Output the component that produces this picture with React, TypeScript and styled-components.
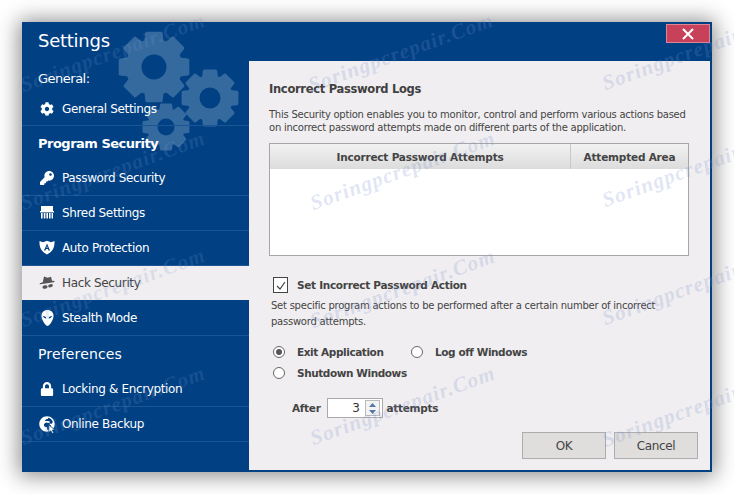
import React from "react";
import styled, { createGlobalStyle } from "styled-components";
import { FaCog, FaKey, FaLock, FaGlobeAfrica } from "react-icons/fa";

const Global = createGlobalStyle`
  html, body { margin: 0; padding: 0; background: #fff; width: 734px; height: 494px; overflow: hidden; }
  * { box-sizing: border-box; }
`;
const FONT = `"DejaVu Sans", Verdana, sans-serif`;

const Page = styled.div`
  width: 734px; height: 494px; padding: 22px; position: relative; overflow: hidden; font-family: ${FONT};
`;
const Win = styled.div`
  width: 690px; height: 450px; background: #004083; display: flex; position: relative;
  box-shadow: 0 1px 20px 3px rgba(0,0,0,.45);
`;
const Side = styled.div`
  width: 227px; flex: none; display: flex; flex-direction: column; position: relative; color: #fff;
`;
const Gears = styled.svg`
  position: absolute; left: 90px; top: 0; width: 137px; height: 140px;
`;
const Title = styled.div`
  font-size: 18px; line-height: 22px; padding: 8px 0 0 16px; height: 39px; position: relative; letter-spacing: -.25px;
`;
const Group = styled.div<{ $h: number; $bold?: boolean; $size?: number; $ls?: number }>`
  height: ${p => p.$h}px; padding: 0 0 1px 16px; display: flex; align-items: center; position: relative;
  font-size: ${p => p.$size ?? 14}px; font-weight: ${p => (p.$bold ? 700 : 400)}; letter-spacing: ${p => p.$ls ?? 0}px;
`;
const GeneralGroup = styled(Group)`
  padding-bottom: 0; padding-top: 1px;
`;
const Row = styled.div<{ $active?: boolean; $h?: number; $pb?: number }>`
  height: ${p => p.$h ?? 35}px; display: flex; align-items: center; position: relative; font-size: 12px; letter-spacing: -.35px;
  padding: 0 0 ${p => p.$pb ?? 0}px 14px;
  background: ${p => (p.$active ? "#f0eef0" : "transparent")};
  color: ${p => (p.$active ? "#444" : "#fff")};
  border-bottom: 1px solid ${p => (p.$active ? "#004083" : "#1a5596")};
`;
const Ico = styled.span`
  width: 26px; flex: none; display: flex; align-items: center; justify-content: center; padding-right: 4px;
  svg { display: block; }
`;
const Main = styled.div`
  flex: 1; display: flex; flex-direction: column; min-width: 0; position: relative;
`;
const Top = styled.div`
  height: 39px; flex: none; display: flex; justify-content: flex-end; padding: 2px 2px 0 0;
`;
const Close = styled.div`
  width: 44px; height: 19px; background: #c7415b; border: 1px solid #dd8593; display: flex; align-items: center; justify-content: center;
`;
const Panel = styled.div`
  flex: 1; margin: 0 2px 2px 0; background: #f0eef0; padding: 19px 21px 0 20px; color: #3c3c3c; position: relative;
`;
const H = styled.div`
  font-size: 11.5px; font-weight: 700; line-height: 18px; color: #404040; letter-spacing: -.3px;
`;
const Para = styled.p`
  margin: 10px 0 0; font-size: 10px; letter-spacing: -.24px; line-height: 13px; color: #444; white-space: nowrap;
`;
const Table = styled.div`
  width: 420px; height: 113px; margin-top: 9px; border: 1px solid #a6a6a6; background: #fff;
`;
const THead = styled.div`
  height: 25px; display: flex; background: linear-gradient(#f2f2f2, #dcdcdc); font-size: 10.5px; letter-spacing: -.2px; font-weight: 700; color: #444;
`;
const Th = styled.div<{ $w: number }>`
  width: ${p => p.$w}px; display: flex; align-items: center; justify-content: center;
  & + & { border-left: 1px solid #c8c8c8; }
`;
const CheckRow = styled.div`
  display: flex; align-items: center; margin: 21px 0 0 4px; gap: 9px;
  font-size: 10.5px; letter-spacing: -.3px; font-weight: 700; color: #444;
`;
const CheckBox = styled.span`
  width: 15px; height: 16px; border: 1px solid #444; background: #fff; display: flex; align-items: center; justify-content: center;
`;
const Para2 = styled(Para)`
  margin: 5px 0 0 2px; line-height: 16px;
`;
const Radios = styled.div`
  display: grid; grid-template-columns: 138px auto; justify-content: start; row-gap: 5px; margin: 14px 0 0 4px;
`;
const RadioLabel = styled.label`
  display: flex; align-items: center; gap: 12px; height: 16px; white-space: nowrap;
  font-size: 10.5px; letter-spacing: -.42px; font-weight: 700; color: #444;
`;
const Radio = styled.span<{ $on?: boolean }>`
  width: 12px; height: 12px; border-radius: 50%; border: 1px solid #666; background: #fff; display: flex; align-items: center; justify-content: center;
  &::after { content: ""; width: 6px; height: 6px; border-radius: 50%; background: ${p => (p.$on ? "#555" : "transparent")}; }
`;
const After = styled.div`
  display: flex; align-items: center; margin: 17px 0 0 23px; font-size: 10.5px; letter-spacing: -.3px; font-weight: 700; color: #444; gap: 4px;
`;
const Spin = styled.div`
  width: 56px; height: 20px; margin-left: 2px; border: 1px solid #aaa; background: #fff; display: flex; align-items: center; justify-content: flex-end;
`;
const SpinVal = styled.span`
  font-weight: 400; font-size: 12px; padding-right: 5px; color: #333;
`;
const SpinBtns = styled.div`
  width: 15px; height: 16px; margin-right: 2px; border: 1px solid #bbb; display: flex; flex-direction: column; background: #f3f3f3;
`;
const SpinBtn = styled.span`
  flex: 1; display: flex; align-items: center; justify-content: center;
`;
const Buttons = styled.div`
  position: absolute; right: 12px; bottom: 11px; display: flex; gap: 8px;
`;
const Btn = styled.div`
  width: 84px; height: 27px; background: #e0dddd; border: 1px solid #adadad; display: flex; align-items: center; justify-content: center; font-size: 12px; letter-spacing: -.35px; color: #444;
`;
const Mark = styled.span<{ $x: number; $y: number }>`
  position: absolute; left: ${p => p.$x}px; top: ${p => p.$y - 24}px; transform: rotate(-20deg); transform-origin: left bottom;
  font-family: "Liberation Serif", serif; font-style: italic; font-weight: 700; font-size: 21px; line-height: 24px; letter-spacing: 1.1px; white-space: nowrap; pointer-events: none;
  color: ${p => (p.$x < 240 ? "rgba(120,150,205,.2)" : "rgba(125,145,205,.24)")};
`;

const gearPath = (cx: number, cy: number, R: number, r: number, n: number) => {
  let d = "";
  for (let i = 0; i < n; i++) {
    const a = (i / n) * Math.PI * 2 - Math.PI / 2;
    const w = (Math.PI / n) * 0.62;
    const pts = [
      [r, a - w * 1.25], [R, a - w * 0.85], [R, a + w * 0.85], [r, a + w * 1.25],
    ];
    pts.forEach(([q, t], j) => {
      const x = (cx + q * Math.cos(t)).toFixed(1), y = (cy + q * Math.sin(t)).toFixed(1);
      d += (i === 0 && j === 0 ? "M" : "L") + x + " " + y + " ";
    });
  }
  d += "Z ";
  return d;
};

const Gear = ({ cx, cy, R, hole }: { cx: number; cy: number; R: number; hole: number }) => (
  <g>
    <path d={gearPath(cx, cy, R - 1.5, (R - 1.5) * 0.78, 8)} fill="#356a9f" stroke="#356a9f" strokeWidth="3" strokeLinejoin="round" />
    <circle cx={cx} cy={cy} r={hole} fill="#004083" />
  </g>
);

const Shred = () => (
  <svg width="14" height="13" viewBox="0 0 14 13" fill="#fff">
    <rect x="1" y="0" width="12" height="5" />
    <rect x="0" y="5" width="14" height="1.400" />
    <path d="M1 7h1.600v5.500H1zM3.800 7h1.600v5.500H3.800zM6.400 7h1.600v5.500H6.400zM9 7h1.600v5.500H9zM11.600 7h1.400v5.500h-1.400z" />
  </svg>
);
const Shield = () => (
  <svg width="16" height="15" viewBox="0 0 16 15">
    <path d="M.5 1 4 2.200 8 .8l4 1.400L15.500 1c.3 6-1.600 10.700-7.500 13.500C2.100 11.700.2 7 .5 1Z" fill="#fff" />
    <path d="M8 3.500 11 10.500H9.500L8.900 9H7.100L6.500 10.500H5ZM8 6 7.400 7.800h1.200Z" fill="#004083" fillRule="evenodd" />
  </svg>
);
const Alien = () => (
  <svg width="13" height="16" viewBox="0 0 13 16">
    <path d="M6.500 0C3 0 .5 2.400.5 5.800c0 3.700 3 9.200 6 10.200 3-1 6-6.500 6-10.200C12.500 2.400 10 0 6.500 0Z" fill="#fff" />
    <path d="M2 6c1.600 0 3 .8 3.400 2.400C3.700 8.500 2.400 7.600 2 6ZM11 6c-1.600 0-3 .8-3.400 2.400C9.300 8.500 10.600 7.600 11 6Z" fill="#004083" />
  </svg>
);
const Spy = () => (
  <svg width="16" height="14" viewBox="0 0 16 14" fill="#555">
    <path d="M5 .6 8.500 1.800 12 .8l1 4 2.500.3c.4.600-.2 1-.8 1.200L1.500 8.300C.7 8.300.4 7.800 1 7.300l2.800-1.100Z" />
    <ellipse cx="6" cy="11" rx="2.600" ry="1.700" transform="rotate(-12 6 11)" />
    <ellipse cx="11.500" cy="9.800" rx="2.400" ry="1.600" transform="rotate(-12 11.500 9.800)" />
  </svg>
);
const IconStack = styled.span`
  position: relative; display: block; width: 16px; height: 16px;
`;
const Cursor = styled.svg`
  position: absolute; right: -1px; bottom: -2px;
`;
const Globe = () => (
  <IconStack>
    <FaGlobeAfrica size={16} color="#fff" />
    <Cursor width="8" height="10" viewBox="0 0 8 10">
      <path d="M.8.8v7.800l2-1.800 1.500 2.700 1.500-.8-1.500-2.600H7Z" fill="#fff" stroke="#004083" strokeWidth=".8" />
    </Cursor>
  </IconStack>
);

const marks: [number, number][] = [
  [25, 97], [313, 97], [607, 95],
  [25, 215], [315, 215], [607, 212],
  [25, 332], [315, 333], [607, 330],
  [25, 450], [315, 450], [607, 452],
];

export default function App() {
  return (
    <Page>
      <Global />
      <Win>
        <Side>
          <Gears viewBox="0 0 137 140" aria-hidden>
            <Gear cx={42} cy={45} R={36} hole={12.500} />
            <Gear cx={98} cy={76} R={29} hole={10.500} />
            <Gear cx={54} cy={105} R={24} hole={8.500} />
          </Gears>
          <Title>Settings</Title>
          <GeneralGroup $h={34} $size={13} $ls={-.5}>General:</GeneralGroup>
          <Row $h={31} $pb={2}><Ico><FaCog size={14} color="#fff" /></Ico>General Settings</Row>
          <Group $h={35} $size={13} $bold $ls={-.5}>Program Security</Group>
          <Row><Ico><FaKey size={14} color="#fff" /></Ico>Password Security</Row>
          <Row $pb={1}><Ico><Shred /></Ico>Shred Settings</Row>
          <Row $pb={1}><Ico><Shield /></Ico>Auto Protection</Row>
          <Row $active $pb={1}><Ico><Spy /></Ico>Hack Security</Row>
          <Row $pb={1}><Ico><Alien /></Ico>Stealth Mode</Row>
          <Group $h={36} $ls={.15}>Preferences</Group>
          <Row><Ico><FaLock size={14} color="#fff" /></Ico>Locking &amp; Encryption</Row>
          <Row $pb={1}><Ico><Globe /></Ico>Online Backup</Row>
        </Side>
        <Main>
          <Top>
            <Close>
              <svg width="12" height="12" viewBox="0 0 12 12"><path d="M1 1l10 10M11 1L1 11" stroke="#fff" strokeWidth="2" /></svg>
            </Close>
          </Top>
          <Panel>
            <H>Incorrect Password Logs</H>
            <Para>This Security option enables you to monitor, control and perform various actions based<br />on incorrect password attempts made on different parts of the application.</Para>
            <Table>
              <THead>
                <Th $w={300}>Incorrect Password Attempts</Th>
                <Th $w={118}>Attempted Area</Th>
              </THead>
            </Table>
            <CheckRow>
              <CheckBox>
                <svg width="10" height="9" viewBox="0 0 10 9"><path d="M1 5l3 3 5-7" fill="none" stroke="#444" strokeWidth="1.200" /></svg>
              </CheckBox>
              Set Incorrect Password Action
            </CheckRow>
            <Para2>Set specific program actions to be performed after a certain number of incorrect<br />password attempts.</Para2>
            <Radios>
              <RadioLabel><Radio $on />Exit Application</RadioLabel>
              <RadioLabel><Radio />Log off Windows</RadioLabel>
              <RadioLabel><Radio />Shutdown Windows</RadioLabel>
            </Radios>
            <After>
              After
              <Spin>
                <SpinVal>3</SpinVal>
                <SpinBtns>
                  <SpinBtn><svg width="7" height="4" viewBox="0 0 7 4"><path d="M3.500 0 7 4H0z" fill="#5578a8" /></svg></SpinBtn>
                  <SpinBtn><svg width="7" height="4" viewBox="0 0 7 4"><path d="M0 0h7L3.500 4z" fill="#5578a8" /></svg></SpinBtn>
                </SpinBtns>
              </Spin>
              attempts
            </After>
            <Buttons>
              <Btn>OK</Btn>
              <Btn>Cancel</Btn>
            </Buttons>
          </Panel>
        </Main>
      </Win>
      {marks.map(([x, y], i) => (
        <Mark key={i} $x={x} $y={y}>Soringpcrepair.Com</Mark>
      ))}
    </Page>
  );
}
